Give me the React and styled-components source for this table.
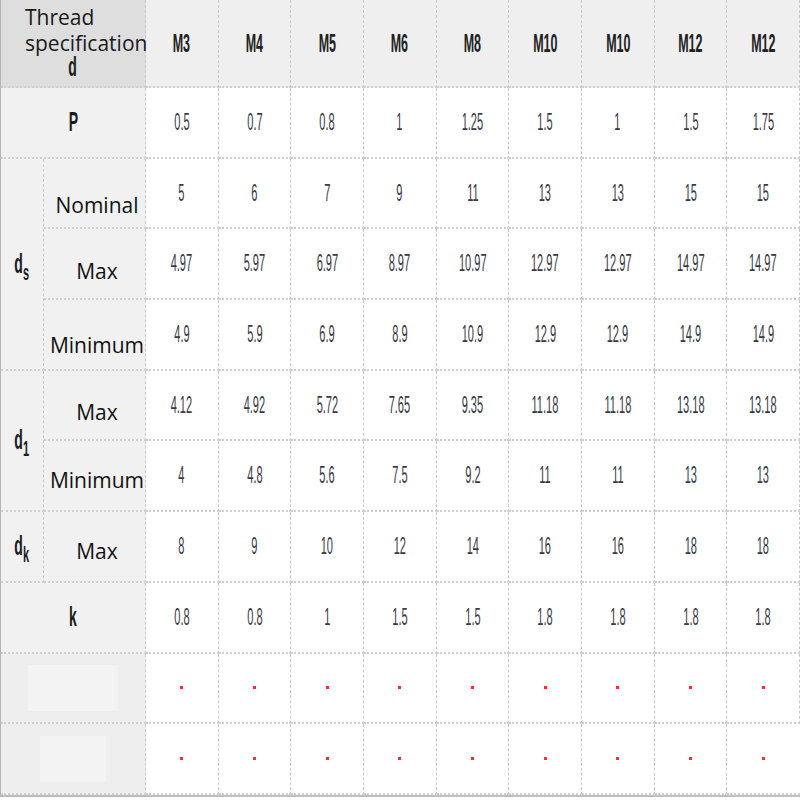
import React from 'react';
import styled, { createGlobalStyle } from 'styled-components';

const GlobalStyle = createGlobalStyle`
  body {
    margin: 0;
    background: #fff;
  }
`;

const sizes = ['M3', 'M4', 'M5', 'M6', 'M8', 'M10', 'M10', 'M12', 'M12'];

const rows = [
  { group: 'P', values: ['0.5', '0.7', '0.8', '1', '1.25', '1.5', '1', '1.5', '1.75'] },
  { group: 'd', sub: 's', span: 3, label: 'Nominal', shift: 24, values: ['5', '6', '7', '9', '11', '13', '13', '15', '15'] },
  { label: 'Max', shift: 14, values: ['4.97', '5.97', '6.97', '8.97', '10.97', '12.97', '12.97', '14.97', '14.97'] },
  { label: 'Minimum', shift: 22, values: ['4.9', '5.9', '6.9', '8.9', '10.9', '12.9', '12.9', '14.9', '14.9'] },
  { group: 'd', sub: '1', span: 2, label: 'Max', shift: 14, values: ['4.12', '4.92', '5.72', '7.65', '9.35', '11.18', '11.18', '13.18', '13.18'] },
  { label: 'Minimum', shift: 8, values: ['4', '4.8', '5.6', '7.5', '9.2', '11', '11', '13', '13'] },
  { group: 'd', sub: 'k', span: 1, label: 'Max', shift: 10, values: ['8', '9', '10', '12', '14', '16', '16', '18', '18'] },
  { group: 'k', values: ['0.8', '0.8', '1', '1.5', '1.5', '1.8', '1.8', '1.8', '1.8'] },
  { blank: true, faint: 90 },
  { blank: true, faint: 66 },
];

const Grid = styled.div`
  display: grid;
  grid-template-columns: 43px 102px repeat(9, 1fr);
  grid-template-rows: 88px repeat(10, 70.7px);
  width: 800px;
  border-left: 1px solid #b5b5b5;
  border-bottom: 2px solid #bdbdbd;
  box-sizing: border-box;
`;

const Cell = styled.div`
  box-sizing: border-box;
  display: flex;
  align-items: center;
  justify-content: center;
  border-right: 1px dashed #c9c9c9;
  border-bottom: 2px dotted #cfcfcf;
  background: ${p => p.$bg || '#fff'};
  grid-column: ${p => p.$col || 'auto'};
  grid-row: ${p => p.$row || 'auto'};
  &:last-child {
    border-right: none;
  }
`;

const Corner = styled(Cell)`
  grid-column: span 2;
  flex-direction: column;
  align-items: stretch;
  justify-content: flex-start;
  background: #dedede;
  overflow: visible;
  position: relative;
  z-index: 1;
`;

const CornerText = styled.div`
  font-family: 'Open Sans', 'Noto Sans', sans-serif;
  font-size: 21px;
  line-height: 26px;
  color: #1a1a1a;
  padding: 4px 0 0 24px;
  white-space: nowrap;
`;

const Narrow = styled.span`
  display: inline-block;
  font-family: 'Liberation Sans', Arial, sans-serif;
  font-size: ${p => p.$size || 23}px;
  font-weight: ${p => (p.$bold ? 700 : 400)};
  color: ${p => p.$color || '#3a3a44'};
  transform: scaleX(${p => p.$scale || 0.48});
  line-height: 1;
  white-space: nowrap;
`;

const CornerSymbol = styled.div`
  text-align: center;
  line-height: 18px;
  margin-top: -3px;
`;

const Sub = styled.sub`
  font-size: 22px;
  vertical-align: -7px;
  line-height: 0;
`;

const Label = styled.span`
  font-family: 'Open Sans', 'Noto Sans', sans-serif;
  font-size: 21px;
  color: #111;
  padding-top: ${p => p.$shift || 12}px;
  padding-left: 5px;
  white-space: nowrap;
`;

const Dot = styled.span`
  width: 3px;
  height: 3px;
  background: #ff2b2b;
`;

const Faint = styled.div`
  width: ${p => p.$w}px;
  height: 46px;
  background: #f3f3f3;
`;

function Symbol({ main, sub }) {
  return (
    <Narrow $bold $size={28} $scale={0.5} $color="#1c1c1c">
      {main}
      {sub && <Sub>{sub}</Sub>}
    </Narrow>
  );
}

export default function App() {
  const cells = [];

  rows.forEach((row, r) => {
    const rowKey = `r${r}`;
    if (row.blank) {
      cells.push(
        <Cell key={`${rowKey}-h`} $col="span 2" $bg="#eeeeee">
          <Faint $w={row.faint} />
        </Cell>
      );
      for (let i = 0; i < 9; i++) {
        cells.push(
          <Cell key={`${rowKey}-${i}`}>
            <Dot />
          </Cell>
        );
      }
      return;
    }
    if (row.group && !row.label) {
      cells.push(
        <Cell key={`${rowKey}-h`} $col="span 2" $bg="#f1f1f1">
          <Symbol main={row.group} />
        </Cell>
      );
    } else {
      if (row.group) {
        cells.push(
          <Cell key={`${rowKey}-g`} $row={`span ${row.span}`} $bg="#f1f1f1">
            <Symbol main={row.group} sub={row.sub} />
          </Cell>
        );
      }
      cells.push(
        <Cell key={`${rowKey}-l`} $col="2" $bg="#f1f1f1">
          <Label $shift={row.shift}>{row.label}</Label>
        </Cell>
      );
    }
    row.values.forEach((v, i) => {
      cells.push(
        <Cell key={`${rowKey}-${i}`}>
          <Narrow>{v}</Narrow>
        </Cell>
      );
    });
  });

  return (
    <>
      <GlobalStyle />
      <Grid>
        <Corner>
          <CornerText>
            Thread
            <br />
            specification
          </CornerText>
          <CornerSymbol>
            <Symbol main="d" />
          </CornerSymbol>
        </Corner>
        {sizes.map((s, i) => (
          <Cell key={`h${i}`} $bg="#efefef">
            <Narrow $bold $size={25} $scale={0.5} $color="#222">
              {s}
            </Narrow>
          </Cell>
        ))}
        {cells}
      </Grid>
    </>
  );
}
